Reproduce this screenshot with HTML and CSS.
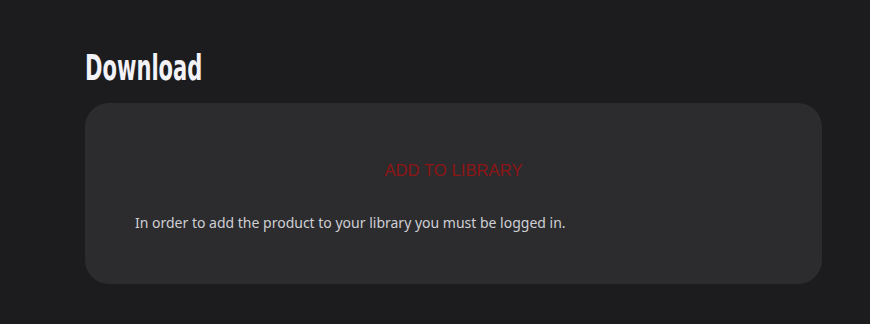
FILE: index.html
```html
<!DOCTYPE html>
<html>
<head>
<meta charset="utf-8">
<link rel="stylesheet" href="styles.css">
</head>
<body>
<main class="section">
  <h2 class="title"><span class="title-text">Download</span></h2>
  <div class="card">
    <div class="action"><a class="add-link">ADD TO LIBRARY</a></div>
    <p class="note">In order to add the product to your library you must be logged in.</p>
  </div>
</main>
</body>
</html>
```
FILE: styles.css
```css
html, body {
  margin: 0;
  padding: 0;
  background: #1c1c1e;
}
.section {
  padding: 48px 48px 0 85px;
}
.title {
  margin: 0 0 15px;
  height: 40px;
  font-family: "DejaVu Sans Condensed", sans-serif;
  font-weight: 700;
  font-size: 36px;
  line-height: 40px;
  color: #f2f2f7;
}
.title-text {
  display: inline-block;
  transform: scaleX(0.65);
  transform-origin: left center;
}
.card {
  width: 737px;
  height: 181px;
  box-sizing: border-box;
  background: #2c2c2f;
  border-radius: 24px;
  padding: 57px 50px 0 50px;
}
.action {
  text-align: center;
  height: 22px;
}
.add-link {
  font-family: "Liberation Sans", Arial, sans-serif;
  font-size: 16.7px;
  line-height: 22px;
  color: #8e1515;
}
.note {
  margin: 31px 0 0;
  font-family: "Noto Sans", sans-serif;
  font-size: 14px;
  line-height: 20px;
  color: #cfcfd4;
}
```
